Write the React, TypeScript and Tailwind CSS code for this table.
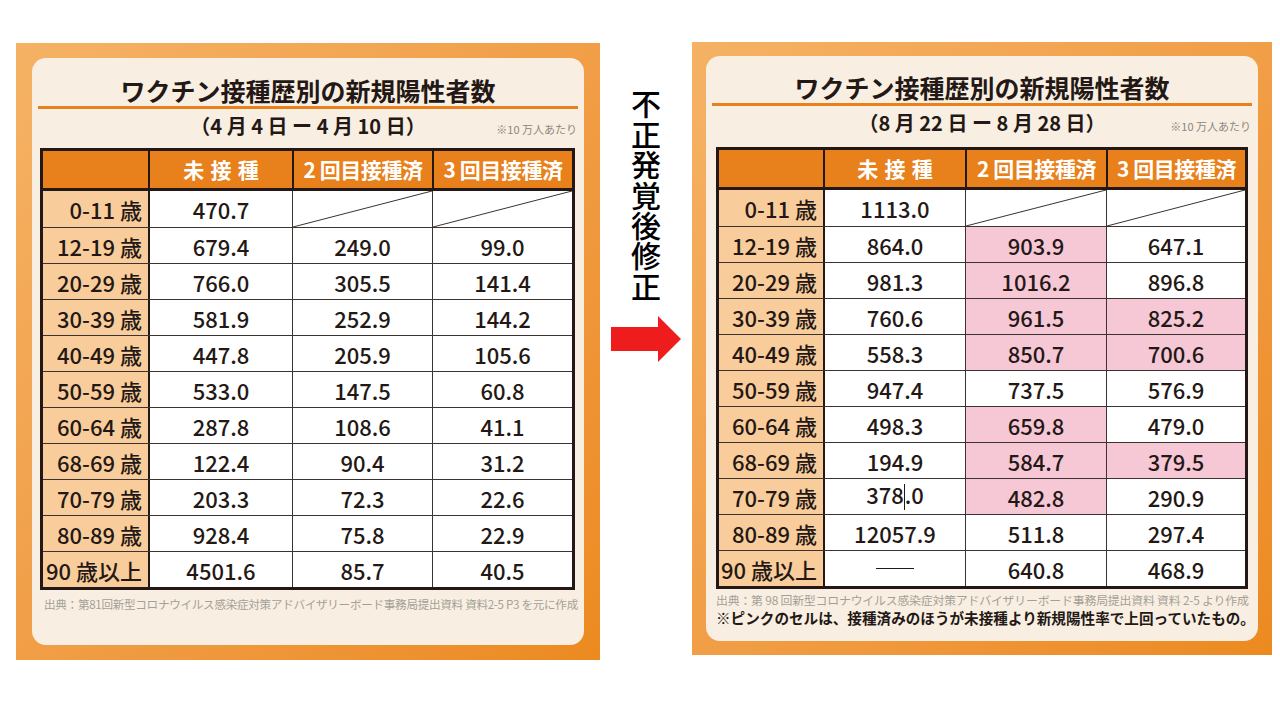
import React from 'react';

// One row of the chart: age label + three values (null = not applicable)
type Cell = { v: string | null; pink?: boolean; cursor?: boolean; dash?: boolean };
type Row = { label: string; cells: Cell[] };

const JP = { fontFamily: '"Noto Sans CJK JP", "Noto Sans", sans-serif' };

const leftRows: Row[] = [
  { label: '0-11 歳', cells: [{ v: '470.7' }, { v: null }, { v: null }] },
  { label: '12-19 歳', cells: [{ v: '679.4' }, { v: '249.0' }, { v: '99.0' }] },
  { label: '20-29 歳', cells: [{ v: '766.0' }, { v: '305.5' }, { v: '141.4' }] },
  { label: '30-39 歳', cells: [{ v: '581.9' }, { v: '252.9' }, { v: '144.2' }] },
  { label: '40-49 歳', cells: [{ v: '447.8' }, { v: '205.9' }, { v: '105.6' }] },
  { label: '50-59 歳', cells: [{ v: '533.0' }, { v: '147.5' }, { v: '60.8' }] },
  { label: '60-64 歳', cells: [{ v: '287.8' }, { v: '108.6' }, { v: '41.1' }] },
  { label: '68-69 歳', cells: [{ v: '122.4' }, { v: '90.4' }, { v: '31.2' }] },
  { label: '70-79 歳', cells: [{ v: '203.3' }, { v: '72.3' }, { v: '22.6' }] },
  { label: '80-89 歳', cells: [{ v: '928.4' }, { v: '75.8' }, { v: '22.9' }] },
  { label: '90 歳以上', cells: [{ v: '4501.6' }, { v: '85.7' }, { v: '40.5' }] },
];

const rightRows: Row[] = [
  { label: '0-11 歳', cells: [{ v: '1113.0' }, { v: null }, { v: null }] },
  { label: '12-19 歳', cells: [{ v: '864.0' }, { v: '903.9', pink: true }, { v: '647.1' }] },
  { label: '20-29 歳', cells: [{ v: '981.3' }, { v: '1016.2', pink: true }, { v: '896.8' }] },
  { label: '30-39 歳', cells: [{ v: '760.6' }, { v: '961.5', pink: true }, { v: '825.2', pink: true }] },
  { label: '40-49 歳', cells: [{ v: '558.3' }, { v: '850.7', pink: true }, { v: '700.6', pink: true }] },
  { label: '50-59 歳', cells: [{ v: '947.4' }, { v: '737.5' }, { v: '576.9' }] },
  { label: '60-64 歳', cells: [{ v: '498.3' }, { v: '659.8', pink: true }, { v: '479.0' }] },
  { label: '68-69 歳', cells: [{ v: '194.9' }, { v: '584.7', pink: true }, { v: '379.5', pink: true }] },
  { label: '70-79 歳', cells: [{ v: '378.0', cursor: true }, { v: '482.8', pink: true }, { v: '290.9' }] },
  { label: '80-89 歳', cells: [{ v: '12057.9' }, { v: '511.8' }, { v: '297.4' }] },
  { label: '90 歳以上', cells: [{ v: '', dash: true }, { v: '640.8' }, { v: '468.9' }] },
];

function Slash() {
  return (
    <svg className="absolute inset-0 h-full w-full" viewBox="0 0 100 100" preserveAspectRatio="none">
      <line x1="0" y1="100" x2="100" y2="0" stroke="#3a3330" strokeWidth="1" vectorEffect="non-scaling-stroke" />
    </svg>
  );
}

function CellText({ c }: { c: Cell }) {
  if (c.dash) return <span className="inline-block h-px w-[38px] bg-[#231815] align-middle" />;
  if (c.cursor) {
    return (
      <span>
        378<span className="inline-block h-[26px] w-px bg-[#231815] align-[-6px]" />.0
      </span>
    );
  }
  return <span>{c.v}</span>;
}

function DataTable({ rows, cols }: { rows: Row[]; cols: string }) {
  return (
    <div className="border-[3px] border-[#231815] bg-white text-[#231815]" style={JP}>
      <div className={`grid ${cols} h-[40px] border-b-[3px] border-[#231815] bg-[#e8801b] text-[21px] font-bold leading-none text-white`}>
        <div />
        <div className="flex items-center justify-center border-l-2 border-[#231815] tracking-[0.3em] pl-[0.3em]">未接種</div>
        <div className="flex items-center justify-center border-l-2 border-[#231815] tracking-[-0.02em]">2 回目接種済</div>
        <div className="flex items-center justify-center border-l-2 border-[#231815] tracking-[-0.02em]">3 回目接種済</div>
      </div>
      {rows.map((r, i) => (
        <div key={r.label} className={`grid ${cols} h-[36px] ${i > 0 ? 'border-t border-[#3a3330]' : ''}`}>
          <div className="flex items-center justify-end bg-[#f9cd9b] pr-[6px] text-[22px] font-medium leading-none">
            {r.label}
          </div>
          {r.cells.map((c, j) => (
            <div
              key={j}
              className={`relative flex items-center justify-center text-[22px] font-medium leading-none ${
                j === 0 ? 'border-l-2 border-[#231815]' : 'border-l border-[#3a3330]'
              } ${c.pink ? 'bg-[#f6c7d5]' : 'bg-white'}`}
            >
              {c.v === null ? <Slash /> : <CellText c={c} />}
            </div>
          ))}
        </div>
      ))}
    </div>
  );
}

function Heading({ period }: { period: string }) {
  return (
    <>
      <div className="text-center text-[25px] font-bold leading-[30px] text-[#231815]" style={JP}>
        ワクチン接種歴別の新規陽性者数
      </div>
      <div className="mx-[6px] mt-[1px] h-[3px] bg-[#e8801b]" />
      <div className="relative mt-[4px] h-[26px] text-center text-[20px] font-bold leading-[26px] text-[#231815]" style={JP}>
        {period}
        <span className="absolute right-[7px] top-[3px] text-[11px] font-normal text-[#8c8680]">※10 万人あたり</span>
      </div>
    </>
  );
}

function Arrow() {
  return (
    <svg width="70" height="46" viewBox="0 0 70 46">
      <path d="M0 11 H47 V0 L70 23 L47 46 V35 H0 Z" fill="#ee1c1c" />
    </svg>
  );
}

export default function App() {
  return (
    <div className="flex h-[720px] w-[1280px] items-start overflow-hidden bg-white">
      {/* before */}
      <div className="ml-[16px] mt-[43px] h-[617px] w-[584px] bg-gradient-to-br from-[#f5b264] to-[#ec8a1f] p-[15px_16px]">
        <div className="h-full rounded-[14px] bg-[#f8efe2] pt-[17px]">
          <Heading period="（4 月 4 日 ー 4 月 10 日）" />
          <div className="ml-[8px] mr-[9px] mt-[9px]">
            <DataTable rows={leftRows} cols="grid-cols-[105px_144px_140px_140px]" />
          </div>
          <div className="ml-[12px] mt-[6px] text-[11.6px] tracking-[-0.3px] text-[#a59f97]" style={JP}>
            出典：第81回新型コロナウイルス感染症対策アドバイザリーボード事務局提出資料 資料2-5 P3 を元に作成
          </div>
        </div>
      </div>

      {/* middle label */}
      <div className="mt-[89px] flex w-[92px] flex-col items-center">
        <div
          className="text-[30px] font-medium leading-[32px] tracking-[0.4px] text-black [writing-mode:vertical-rl]"
          style={JP}
        >
          不正発覚後修正
        </div>
        <div className="mt-[14px]">
          <Arrow />
        </div>
      </div>

      {/* after */}
      <div className="mt-[42px] h-[613px] w-[580px] bg-gradient-to-br from-[#f5b264] to-[#ec8a1f] p-[14px_14px]">
        <div className="h-full rounded-[14px] bg-[#f8efe2] pt-[16px]">
          <Heading period="（8 月 22 日 ー 8 月 28 日）" />
          <div className="ml-[10px] mr-[10px] mt-[11px]">
            <DataTable rows={rightRows} cols="grid-cols-[104px_142px_141px_139px]" />
          </div>
          <div className="ml-[10px] mt-[3px] text-[11.9px] leading-[16px] tracking-[-0.2px] text-[#a59f97]" style={JP}>
            出典：第 98 回新型コロナウイルス感染症対策アドバイザリーボード事務局提出資料 資料 2-5 より作成
          </div>
          <div className="ml-[10px] mt-[1px] text-[14.6px] font-bold leading-[18px] text-[#231815]" style={JP}>
            ※ピンクのセルは、接種済みのほうが未接種より新規陽性率で上回っていたもの。
          </div>
        </div>
      </div>
    </div>
  );
}
